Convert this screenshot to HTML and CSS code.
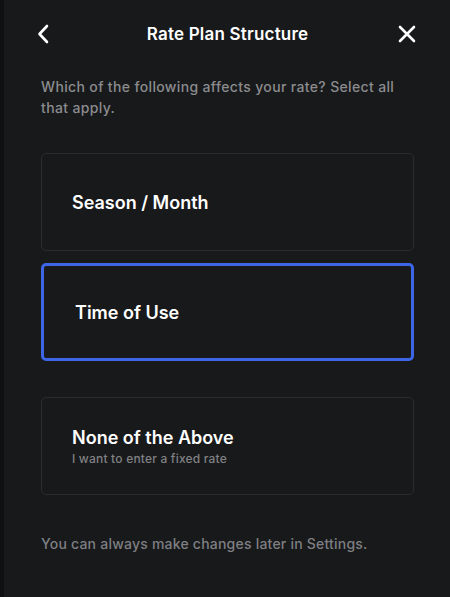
FILE: index.html
```html
<!DOCTYPE html>
<html>
<head>
<meta charset="utf-8">
<link rel="stylesheet" href="styles.css">
</head>
<body>
<div class="screen">
  <header class="topbar">
    <button class="icon-btn back" aria-label="Back">
      <svg width="12" height="20" viewBox="0 0 12 20"><path d="M10 2 L2.5 10 L10 18" fill="none" stroke="#fff" stroke-width="2.6" stroke-linecap="round" stroke-linejoin="round"/></svg>
    </button>
    <h1 class="title">Rate Plan Structure</h1>
    <button class="icon-btn close" aria-label="Close">
      <svg width="18" height="18" viewBox="0 0 18 18"><path d="M2 2 L16 16 M16 2 L2 16" fill="none" stroke="#fff" stroke-width="2.6" stroke-linecap="round"/></svg>
    </button>
  </header>
  <p class="question">Which of the following affects your rate? Select all that apply.</p>
  <div class="options">
    <div class="option">
      <div class="opt-title">Season / Month</div>
    </div>
    <div class="option selected">
      <div class="opt-title">Time of Use</div>
    </div>
    <div class="option last">
      <div class="opt-title">None of the Above</div>
      <div class="opt-sub">I want to enter a fixed rate</div>
    </div>
  </div>
  <p class="footnote">You can always make changes later in Settings.</p>
</div>
</body>
</html>
```

FILE: styles.css
```css
* { box-sizing: border-box; }
html, body { margin: 0; padding: 0; background: #0f1011; }
body {
  font-family: Inter, "Noto Sans", sans-serif;
  color: #fff;
  width: 450px;
  height: 597px;
  overflow: hidden;
}
.screen {
  margin-left: 4px;
  height: 597px;
  background: #18191b;
  padding: 0 36px 0 37px;
}
.topbar {
  height: 68px;
  display: grid;
  grid-template-columns: 1fr auto 1fr;
  align-items: center;
}
.icon-btn {
  background: none;
  border: 0;
  padding: 0;
  width: 20px;
  height: 20px;
  display: flex;
  align-items: center;
  justify-content: center;
  cursor: pointer;
}
.icon-btn.back { justify-self: start; margin-left: -8px; }
.icon-btn.close { justify-self: end; margin-right: -3px; }
.title {
  margin: 0;
  font-size: 17px;
  font-weight: 600;
  letter-spacing: 0.2px;
  color: #fff;
}
.question {
  margin: 8px 0 0;
  font-size: 14px;
  line-height: 21px;
  letter-spacing: 0.35px;
  color: #8b8c8e;
  font-weight: 500;
}
.options {
  margin-top: 35px;
  display: flex;
  flex-direction: column;
}
.option {
  height: 98px;
  border: 1px solid #2b2c2e;
  border-radius: 5px;
  padding-left: 30px;
  display: flex;
  flex-direction: column;
  justify-content: center;
  margin-bottom: 12px;
}
.option.selected {
  border: 3px solid #3c66e6;
  border-radius: 5px;
  padding-left: 31px;
  margin-bottom: 36px;
}
.option.last { margin-bottom: 0; }
.opt-title {
  font-size: 18px;
  font-weight: 600;
  color: #fff;
}
.opt-sub {
  margin-top: 3px;
  font-size: 12px;
  letter-spacing: 0.2px;
  font-weight: 500;
  color: #808184;
}
.footnote {
  margin: 40px 0 0;
  font-size: 14px;
  letter-spacing: 0.22px;
  font-weight: 500;
  color: #7e7f82;
}
```
